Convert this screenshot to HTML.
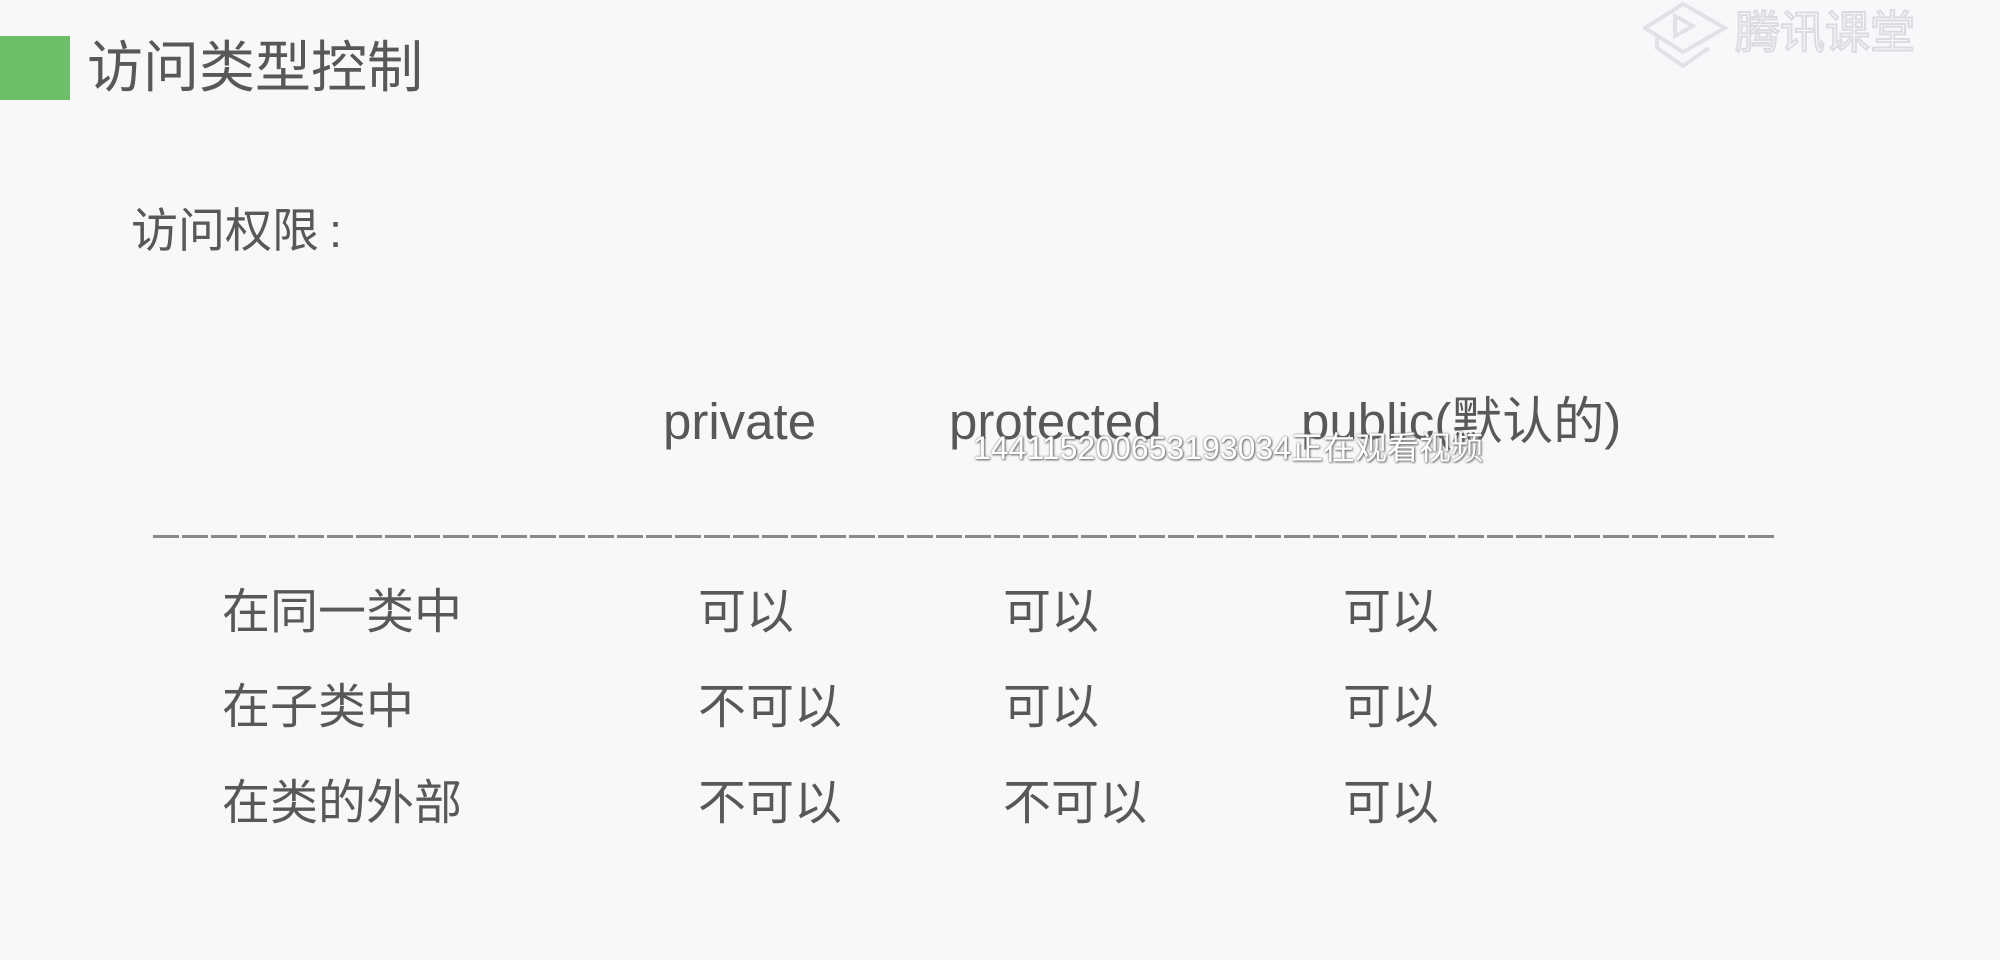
<!DOCTYPE html>
<html><head><meta charset="utf-8"><style>
html,body{margin:0;padding:0}
body{width:2000px;height:960px;background:#f8f8fa;position:relative;overflow:hidden;font-family:"Liberation Sans","Noto Sans CJK SC",sans-serif;color:#58585a}
.a{position:absolute;white-space:nowrap;line-height:1}
.g{position:absolute;left:0;top:36px;width:70px;height:64px;background:#6cbf67}
.r{font-size:48px}
.line{position:absolute;left:153px;top:535px;width:1624px;height:3px;background:repeating-linear-gradient(90deg,#8a8a8c 0 26px,transparent 26px 29px)}
.wm{font-size:32px;color:#fff;text-shadow:0 0 2px #777,1px 1px 2px #666;transform:scaleX(1.0);transform-origin:left}
</style></head><body>
<div class="g"></div>
<div class="a" style="left:87px;top:40px;font-size:56px">访问类型控制</div>
<div class="a" style="left:131px;top:207px;font-size:47px">访问权限<span style="margin-left:10px">:</span></div>
<div class="a r" style="left:663px;top:396px;font-size:51px">private</div>
<div class="a r" style="left:949px;top:396px;font-size:51px">protected</div>
<div class="a r" style="left:1301px;top:396px;font-size:51px">public(默认的)</div>
<div class="a wm" style="left:973px;top:432px">144115200653193034正在观看视频</div>
<div class="line"></div>
<div class="a r" style="left:222px;top:589px">在同一类中</div>
<div class="a r" style="left:698px;top:589px">可以</div>
<div class="a r" style="left:1003px;top:589px">可以</div>
<div class="a r" style="left:1343px;top:589px">可以</div>
<div class="a r" style="left:222px;top:684px">在子类中</div>
<div class="a r" style="left:698px;top:684px">不可以</div>
<div class="a r" style="left:1003px;top:684px">可以</div>
<div class="a r" style="left:1343px;top:684px">可以</div>
<div class="a r" style="left:222px;top:780px">在类的外部</div>
<div class="a r" style="left:698px;top:780px">不可以</div>
<div class="a r" style="left:1003px;top:780px">不可以</div>
<div class="a r" style="left:1343px;top:780px">可以</div>
<svg style="position:absolute;left:1643px;top:0" width="90" height="72" viewBox="0 0 90 72" fill="none" stroke="#e2e2e6" stroke-width="4">
<path d="M2 28 L40 4 L82 28 L40 52 Z"/><path d="M14 38 L14 48 L40 66 L66 48"/><path d="M32 16 L50 26 L32 36 Z"/></svg>
<div class="a" style="left:1735px;top:10px;font-size:45px;color:#f8f8fa;-webkit-text-stroke:2px #dcdce0">腾讯课堂</div>
</body></html>
